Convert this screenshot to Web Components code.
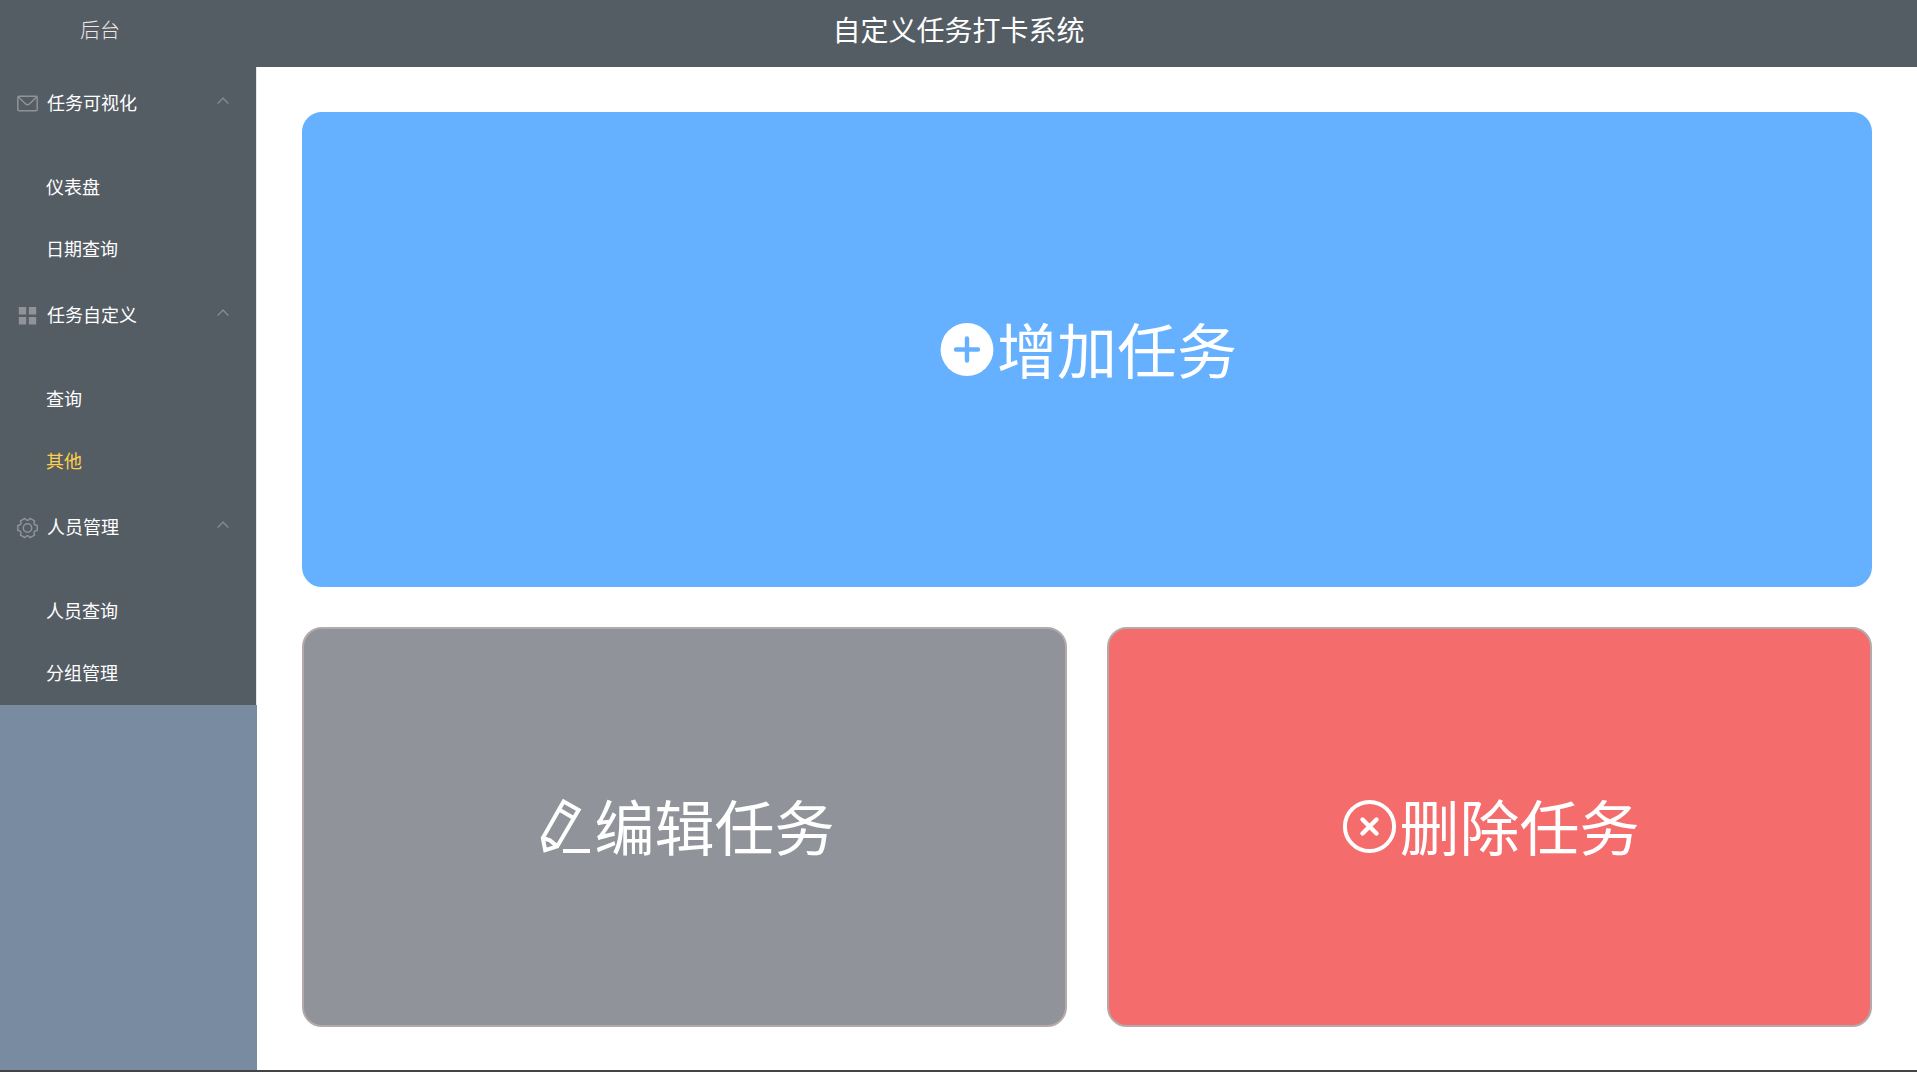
<!DOCTYPE html>
<html lang="zh-CN">
<head>
<meta charset="utf-8">
<meta name="viewport" content="width=device-width, initial-scale=1">
<title>自定义任务打卡系统</title>
<style>
  body { margin: 0; background: #fff; font-family: "Noto Sans CJK SC", "Noto Sans", sans-serif; }
</style>
</head>
<body>
<app-shell>
  <app-header slot="header" heading="自定义任务打卡系统">后台</app-header>
  <side-menu slot="aside">
    <menu-group icon="mail" label="任务可视化">
      <menu-item>仪表盘</menu-item>
      <menu-item>日期查询</menu-item>
    </menu-group>
    <menu-group icon="grid" label="任务自定义">
      <menu-item>查询</menu-item>
      <menu-item active>其他</menu-item>
    </menu-group>
    <menu-group icon="gear" label="人员管理">
      <menu-item>人员查询</menu-item>
      <menu-item>分组管理</menu-item>
    </menu-group>
  </side-menu>
  <task-card kind="add" icon="plus">增加任务</task-card>
  <task-card kind="edit" icon="pencil">编辑任务</task-card>
  <task-card kind="remove" icon="cross">删除任务</task-card>
</app-shell>

<script>
const ICONS = {
  mail: `<svg viewBox="0 0 22 22" fill="none" stroke="currentColor" stroke-width="1.5" stroke-linejoin="round"><rect x="1.8" y="3.2" width="19.4" height="14.6" rx="1.2"/><path d="M2.4 4 9.4 10.8Q11.5 12.8 13.6 10.8L20.6 4"/></svg>`,
  grid: `<svg viewBox="0 0 22 22" fill="currentColor"><path d="M2.8 2h7.4v7.4H2.8zM12.8 2h7.4v7.4h-7.4zM2.8 12h7.4v7.4H2.8zM12.8 12h7.4v7.4h-7.4z"/></svg>`,
  gear: `<svg viewBox="0 0 22 22" fill="none" stroke="currentColor" stroke-width="1.5" stroke-linejoin="round"><path d="M21.2 8.4V13.6Q16.6 13.95 18.6 18.1L14.1 20.7Q11.5 16.9 8.9 20.7L4.4 18.1Q6.4 13.95 1.8 13.6V8.4Q6.4 8.05 4.4 3.9L8.9 1.3Q11.5 5.1 14.1 1.3L18.6 3.9Q16.6 8.05 21.2 8.4Z"/><circle cx="11.5" cy="11" r="4.2"/></svg>`,
  plus: `<svg viewBox="0 0 60 60"><circle cx="30" cy="29.5" r="26.4" fill="currentColor"/><path d="M30 18.5v22M19 29.5h22" fill="none" stroke="#66b1ff" stroke-width="4.4" stroke-linecap="round"/></svg>`,
  pencil: `<svg viewBox="0 0 60 60" fill="none" stroke="currentColor" stroke-width="4"><path d="M28.6 4.4 43.6 13 22.2 49.4 10.2 53.2 7.8 41ZM24 12.6 39 21.2M7.8 41 15 43.4 22.2 49.4M28 54h27"/></svg>`,
  cross: `<svg viewBox="0 0 60 60" fill="none" stroke="currentColor"><circle cx="29.5" cy="29.5" r="24.6" stroke-width="4"/><path d="M22.5 22.5 36.5 36.5M36.5 22.5 22.5 36.5" stroke-width="4.4" stroke-linecap="round"/></svg>`
};

class AppShell extends HTMLElement {
  constructor() {
    super();
    this.attachShadow({ mode: 'open' }).innerHTML = `
      <style>
        :host { display: flex; flex-direction: column; min-height: 100vh; box-sizing: border-box; border-bottom: 2px solid #444346; }
        .body { flex: 1; display: flex; }
        aside { flex: 0 0 257px; background: #798ba1; }
        main { flex: 1; min-width: 0; box-sizing: border-box; display: grid; grid-template-columns: 1fr 1fr; grid-template-rows: 475fr 400fr; gap: 40px; padding: 45px 45px 43px; }
      </style>
      <slot name="header"></slot>
      <div class="body">
        <aside><slot name="aside"></slot></aside>
        <main><slot></slot></main>
      </div>`;
  }
}

class AppHeader extends HTMLElement {
  constructor() {
    super();
    this.attachShadow({ mode: 'open' }).innerHTML = `
      <style>
        :host { display: block; }
        header { display: grid; grid-template-columns: 200px 1fr 200px; height: 67px; background: #545c64; text-align: center; line-height: 60px; }
        .brand { font-size: 20px; font-weight: 300; color: #f2e6e6; }
        h1 { margin: 0; font-size: 28px; font-weight: 400; line-height: 58px; color: #fff; }
      </style>
      <header><span class="brand"><slot></slot></span><h1></h1></header>`;
    this.shadowRoot.querySelector('h1').textContent = this.getAttribute('heading');
  }
}

class SideMenu extends HTMLElement {
  constructor() {
    super();
    this.attachShadow({ mode: 'open' }).innerHTML = `
      <style>
        :host { display: block; }
        nav { background: #545c64; border-right: 1px solid #e6e6e6; padding-bottom: 2px; }
      </style>
      <nav><slot></slot></nav>`;
  }
}

class MenuGroup extends HTMLElement {
  constructor() {
    super();
    this.attachShadow({ mode: 'open' }).innerHTML = `
      <style>
        :host { display: block; }
        button { display: flex; align-items: center; width: 100%; height: 70px; padding: 0 27px 0 16px; border: 0; background: none; color: #fff; font: inherit; font-size: 18px; text-align: left; cursor: pointer; }
        .icon { width: 22px; height: 22px; margin-right: 9px; padding-top: 3px; color: #909399; }
        .icon svg { display: block; }
        .label { flex: 1; }
        .arrow { width: 12px; height: 12px; color: #909399; }
        .items { padding-top: 18px; }
      </style>
      <button type="button" aria-expanded="true">
        <span class="icon">${ICONS[this.getAttribute('icon')]}</span>
        <span class="label"></span>
        <svg class="arrow" viewBox="0 0 12 12" fill="none" stroke="currentColor" stroke-width="1.2"><path d="M.6 7.6 6 2.2 11.4 7.6"/></svg>
      </button>
      <div class="items"><slot></slot></div>`;
    const root = this.shadowRoot;
    root.querySelector('.label').textContent = this.getAttribute('label');
    const button = root.querySelector('button');
    button.addEventListener('click', () => {
      const items = root.querySelector('.items');
      items.hidden = !items.hidden;
      button.setAttribute('aria-expanded', String(!items.hidden));
    });
  }
}

class MenuItem extends HTMLElement {
  constructor() {
    super();
    this.attachShadow({ mode: 'open' }).innerHTML = `
      <style>
        :host { display: block; }
        a { display: block; padding-left: 46px; color: #fff; font-size: 18px; line-height: 62px; text-decoration: none; }
        :host([active]) a { color: #ffd04b; }
      </style>
      <a href="#"><slot></slot></a>`;
  }
}

class TaskCard extends HTMLElement {
  constructor() {
    super();
    this.attachShadow({ mode: 'open' }).innerHTML = `
      <style>
        :host { display: grid; --fill: #66b1ff; --edge: #66b1ff; }
        :host([kind="add"]) { grid-column: 1 / -1; }
        :host([kind="edit"]) { --fill: #909399; --edge: #b5a9a9; }
        :host([kind="remove"]) { --fill: #f56c6c; --edge: #b5a9a9; }
        button { display: flex; align-items: center; justify-content: center; padding: 0; border: 2px solid var(--edge); border-radius: 20px; background: var(--fill); color: #fff; font: inherit; font-size: 60px; line-height: 80px; cursor: pointer; }
        .icon { width: 60px; height: 60px; }
        .icon svg { display: block; }
        .text { padding-bottom: 4px; }
      </style>
      <button type="button"><span class="icon">${ICONS[this.getAttribute('icon')]}</span><span class="text"><slot></slot></span></button>`;
  }
}

customElements.define('app-shell', AppShell);
customElements.define('app-header', AppHeader);
customElements.define('side-menu', SideMenu);
customElements.define('menu-group', MenuGroup);
customElements.define('menu-item', MenuItem);
customElements.define('task-card', TaskCard);
</script>
</body>
</html>
